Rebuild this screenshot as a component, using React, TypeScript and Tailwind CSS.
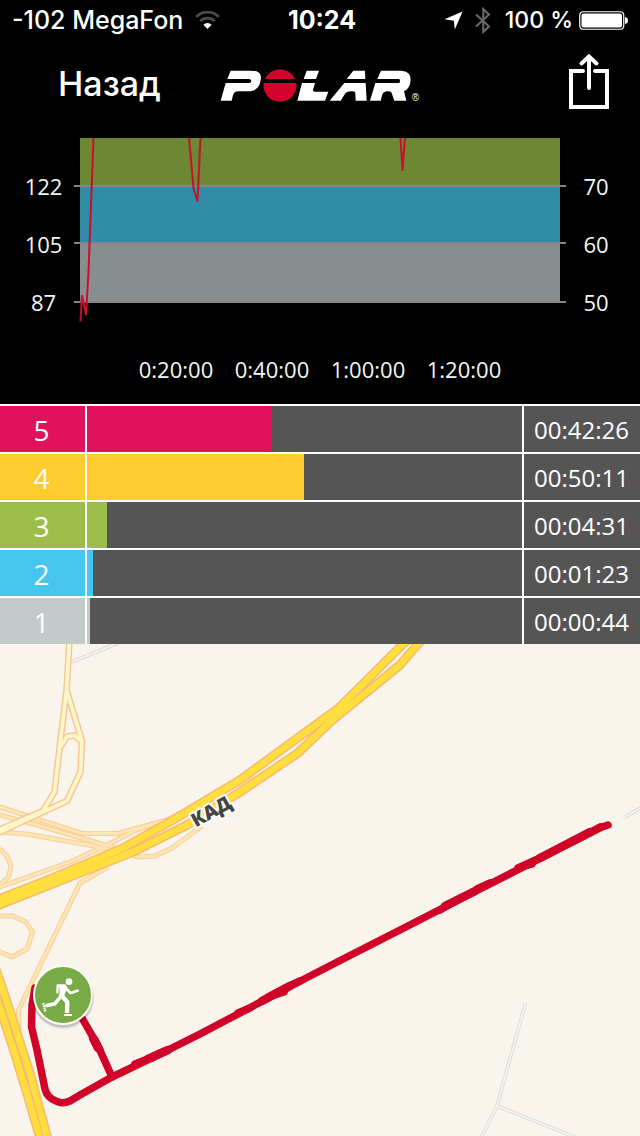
import React from 'react';

type Zone = { zone: number; time: string; share: number; color: string };

const zones: Zone[] = [
  { zone: 5, time: '00:42:26', share: 42.3, color: 'bg-[#df125b]' },
  { zone: 4, time: '00:50:11', share: 49.9, color: 'bg-[#ffcb2f]' },
  { zone: 3, time: '00:04:31', share: 4.6, color: 'bg-[#9dbd4b]' },
  { zone: 2, time: '00:01:23', share: 1.4, color: 'bg-[#46c6ee]' },
  { zone: 1, time: '00:00:44', share: 0.7, color: 'bg-[#c3caca]' },
];

function StatusBar() {
  return (
    <div className="grid h-10 grid-cols-[1fr_auto_1fr] items-center px-3 font-['Inter',sans-serif] leading-10">
      <div className="flex items-center gap-3 text-[25px] font-medium">
        <span className="whitespace-nowrap">-102 MegaFon</span>
        <svg className="h-[18px] w-[25px]" viewBox="0 0 25 18" fill="none" aria-label="Wi-Fi">
          <path d="M1.2 5.8a16 16 0 0 1 22.6 0" stroke="#4c4c4c" strokeWidth="2.600" />
          <path d="M5.2 10.1a10.4 10.4 0 0 1 14.6 0" stroke="#4c4c4c" strokeWidth="2.600" />
          <path d="M12.5 18 8.4 13.7a6 6 0 0 1 8.2 0Z" fill="#fff" />
        </svg>
      </div>
      <time className="pl-1 text-[25px] font-bold">10:24</time>
      <div className="flex items-center justify-end text-[23px] font-medium">
        <svg className="mr-3 h-[19px] w-[19px] shrink-0" viewBox="0 0 19 19" aria-label="Location">
          <path d="M18.5 .5 10.8 18.5 9.8 9.8 .5 8.3Z" fill="#fff" />
        </svg>
        <svg className="mr-[14px] h-[27px] w-4 shrink-0" viewBox="0 0 16 27" fill="none" stroke="#6b6b6b" strokeWidth="2" aria-label="Bluetooth">
          <path d="M1 7.5 14 19.5 8.3 25V2L14 7.5 1 19.5" />
        </svg>
        <span className="mr-1.5 whitespace-nowrap">100 %</span>
        <svg className="h-[19px] w-[49px] shrink-0" viewBox="0 0 49 19" aria-label="Battery full">
          <rect x=".75" y=".75" width="44" height="17.5" rx="3.5" fill="none" stroke="#fff" strokeWidth="1.2" />
          <rect x="2.5" y="2.5" width="40.5" height="14" rx="2" fill="#fff" />
          <path d="M46 6q3 .5 3 3.5t-3 3.5Z" fill="#fff" />
        </svg>
      </div>
    </div>
  );
}

function PolarLogo() {
  return (
    <svg className="h-[35px] w-[200px]" viewBox="30 25 600 105" role="img" aria-label="Polar">
      <g fill="#fff">
        <path d="M62 33H122C148 33 155 42 152 62C149 82 138 95 115 95H85Q72 95 69 107L65 123H32L47 70H118Q124 69 124 64Q124 59 118 58H52Z" />
        <path d="M290 33H327L318 58H281ZM276 70H315L309 90Q308 96 315 96H355L345 123H262Z" />
        <path d="M430 33H465L466 58H410ZM403 70H467L470 123H437L436 102Q436 95 428 95H421Q411 95 406 101L392 123H359Z" />
        <path d="M513 33H573Q603 35 602 60Q600 88 582 94L589 123H553L545 100Q543 95 536 95H530Q520 96 517 104L512 123H480L496 70H568Q573 64 568 58H502Z" />
      </g>
      <path d="M165 58A49 49 0 0 1 255 58ZM161 70H259A49.5 49.5 0 1 1 161 70Z" fill="#d3002b" />
      <text x="605" y="123" fontSize="30" fill="#fff" fontFamily="Liberation Sans, sans-serif">®</text>
    </svg>
  );
}

function NavBar() {
  return (
    <header className="grid h-[98px] grid-cols-[1fr_auto_1fr] items-start px-[30px]">
      <button type="button" className="ml-7 mt-6 justify-self-start font-['Inter',sans-serif] text-[34px] font-medium leading-10">
        Назад
      </button>
      <h1 className="mt-7">
        <PolarLogo />
      </h1>
      <button type="button" aria-label="Share" className="mt-3 justify-self-end">
        <svg className="h-[58px] w-[42px]" viewBox="0 0 42 58" fill="none" stroke="#fff" strokeWidth="4" strokeLinecap="round">
          <path d="M15 19H3V55H39V19H27" strokeLinejoin="miter" />
          <path d="M21 36V5M13.500 11.500 21 4.500 28.500 11.500" />
        </svg>
      </button>
    </header>
  );
}

function ScaleLabels({ values }: { values: number[] }) {
  return (
    <>
      {values.map((v) => (
        <div key={v} className="h-[58px] leading-6">
          {v}
        </div>
      ))}
    </>
  );
}

function HeartRateChart() {
  return (
    <section aria-label="Heart rate" className="h-[266px] font-['Open_Sans',sans-serif] text-[22px] text-[#f5f5f5]">
      <div className="flex">
        <div className="w-[74px] shrink-0 pl-[13px] pt-9 text-center">
          <ScaleLabels values={[122, 105, 87]} />
        </div>
        <svg className="h-[186px] min-w-0 flex-1" viewBox="74 138 492 186" preserveAspectRatio="none">
          <rect x="80" y="138" width="480" height="48" fill="#6e8733" />
          <rect x="80" y="186" width="480" height="57" fill="#318ca8" />
          <rect x="80" y="243" width="480" height="59" fill="#888e8e" />
          <path d="M74 186H566M74 243H566M74 302H566" stroke="#858585" strokeWidth="2" />
          <g fill="none" stroke="#c8102e" strokeWidth="2">
            <path d="M80.500 321.500 82 295 86 315 88.500 272 93.500 138" />
            <path d="M189 138 193.500 188 197.500 201.500 200.500 138" />
            <path d="M400.500 138 402.500 171 405 138" />
          </g>
        </svg>
        <div className="w-[74px] shrink-0 pr-[14px] pt-9 text-center">
          <ScaleLabels values={[70, 60, 50]} />
        </div>
      </div>
      <div className="mx-20 flex pt-[6px] text-center leading-[30px]">
        <span className="flex-1" />
        {['0:20:00', '0:40:00', '1:00:00', '1:20:00'].map((t) => (
          <span key={t} className="flex-2">
            {t}
          </span>
        ))}
        <span className="flex-1" />
      </div>
    </section>
  );
}

function ZoneTable() {
  return (
    <table aria-label="Time in zones" className="w-full table-fixed border-separate border-spacing-0 bg-[#555555] font-['Open_Sans',sans-serif]">
      <colgroup>
        <col className="w-[87px]" />
        <col />
        <col className="w-[116px]" />
      </colgroup>
      <tbody>
        {zones.map((z) => (
          <tr key={z.zone}>
            <th scope="row" className={`h-12 border-t-2 border-r-2 border-white p-0 pr-0.5 pt-0.5 text-center text-[28px] font-normal leading-[44px] ${z.color}`}>
              {z.zone}
            </th>
            <td className="h-12 border-t-2 border-r-2 border-white p-0">
              <div className={`h-[46px] ${z.color}`} style={{ width: `${z.share}%` }} />
            </td>
            <td className="h-12 whitespace-nowrap border-t-2 border-white p-0 pl-2.5 pt-0.5 text-[24px] leading-[44px]">{z.time}</td>
          </tr>
        ))}
      </tbody>
    </table>
  );
}

const ramps = [
  'M-4 806 0 807 82 833.500H118L167 820 232 787',
  'M-4 814 0 815 37 825 115 848 137 857 155 856 172 848 202 826',
  'M-4 832 0 832 27 834 100 847 125 854',
  'M-4 888 0 887 70 862 107 845 136 830 167 820',
  'M-2 849 1 850 7 856 11 866 8.500 877 0 885',
  'M-4 916H13L26 922 32.500 932 27 949 12 957 -2 951',
  'M108 867 80 883 18.500 1010 19 1036',
];
const localRoads = [
  'M69.500 640 66.500 691 60 744 54.500 792 43 811 -4 831',
  'M66.500 690 82 741 80.500 772 67 801 43 812 -4 834',
  'M60.500 747 67 736.500 75 735.500 82 742',
];
const motorways = [
  'M408 640 403 644 365 682 338 708.500 240 780 173 820 123 848 50 879 -6 901',
  'M422 640 418 644 400 665 330 722 298 753 240 792 187 825 133 852 50 885 -6 907',
  'M-6 965 0 981 14.500 1025 31 1077 47.500 1138',
  'M-6 990 0 1008 13 1048 26 1090 40 1138',
];
const tracks = [
  'M72 662 118 643',
  'M624 818 642 807',
  'M525.500 1003 497 1106 481 1138',
  'M497 1106 575 1137',
];

function Road({ paths, casing, fill, outer, inner }: { paths: string[]; casing: string; fill: string; outer: number; inner: number }) {
  return (
    <g fill="none" strokeLinejoin="round">
      {paths.map((d) => (
        <path key={`c${d}`} d={d} stroke={casing} strokeWidth={outer} />
      ))}
      {paths.map((d) => (
        <path key={`f${d}`} d={d} stroke={fill} strokeWidth={inner} />
      ))}
    </g>
  );
}

function RouteMap() {
  return (
    <svg className="block h-auto w-full bg-[#f9f4ec]" viewBox="0 644 640 492" role="img" aria-label="Route map">
      <Road paths={tracks} casing="#dcdbd8" fill="#f6f3ed" outer={3.6} inner={1.8} />
      <Road paths={ramps} casing="#f9cf9b" fill="#fde6b3" outer={5} inner={2.8} />
      <Road paths={localRoads} casing="#f6c592" fill="#fff6ca" outer={6.6} inner={3.8} />
      <Road paths={motorways} casing="#f7ba72" fill="#ffde3e" outer={9.4} inner={6.4} />
      <text
        x="211"
        y="811"
        dy="7"
        transform="rotate(-29 211 811)"
        textAnchor="middle"
        fontFamily="Open Sans, sans-serif"
        fontWeight="800"
        fontSize="19"
        fill="#444"
        stroke="#fffdf5"
        strokeWidth="4"
        strokeLinejoin="round"
        paintOrder="stroke"
      >
        КАД
      </text>
      <g fill="none" stroke="#d00328" strokeWidth="7.500" strokeLinecap="round" strokeLinejoin="round">
        <path d="M608 825 602 827 533 862 480 889 400 930 345 958 283 990 240 1013 200 1034 158 1055 112 1077 80 1095 70 1101Q63 1104 57 1101.500Q47 1098 45 1089L37 1050 31.500 1027 32 1005 35 988" />
        <path d="M112 1077 98 1046 82 1018" />
        <path d="M600 827 570 843M540 858 518 868 532 864M490 883 477 889M450 904 440 910M300 981 285 988 268 997 284 992M250 1008 238 1013M165 1051 150 1058 135 1064M100 1050 95 1040" />
        <path strokeWidth="8.500" d="M590 832 540 858M475 891 445 906M290 986 262 1001M168 1050 148 1059M98 1048 93 1038" />
      </g>
      <circle cx="63" cy="998" r="31" fill="#000" opacity=".08" />
      <circle cx="63" cy="997" r="30.500" fill="#000" opacity=".14" />
      <circle cx="63" cy="995" r="29" fill="#78aa45" stroke="#fffdf6" strokeWidth="2" />
      <g transform="translate(30 960) scale(.33333)" fill="none" stroke="#fff" strokeLinejoin="round">
        <circle cx="117" cy="65" r="10" fill="#fff" stroke="none" />
        <path d="M80 73H106L113 84 106 98 100 114 84 116 89 98 88 84Z" fill="#fff" stroke="none" />
        <path d="M83 75 82 100" strokeWidth="7" />
        <path d="M106 84 122 99 146 91" strokeWidth="8" />
        <path d="M96 108 112 126 111 159" strokeWidth="13" />
        <path d="M92 110 75 131 48 137" strokeWidth="11" />
        <path d="M102 165H126" strokeWidth="6" />
        <path d="M40 129 46 155" strokeWidth="7" strokeDasharray="5 2" />
        <path d="M43 138 52 136" strokeWidth="5" />
      </g>
    </svg>
  );
}

export default function App() {
  return (
    <main className="min-h-screen bg-black text-white">
      <StatusBar />
      <NavBar />
      <HeartRateChart />
      <ZoneTable />
      <RouteMap />
    </main>
  );
}
